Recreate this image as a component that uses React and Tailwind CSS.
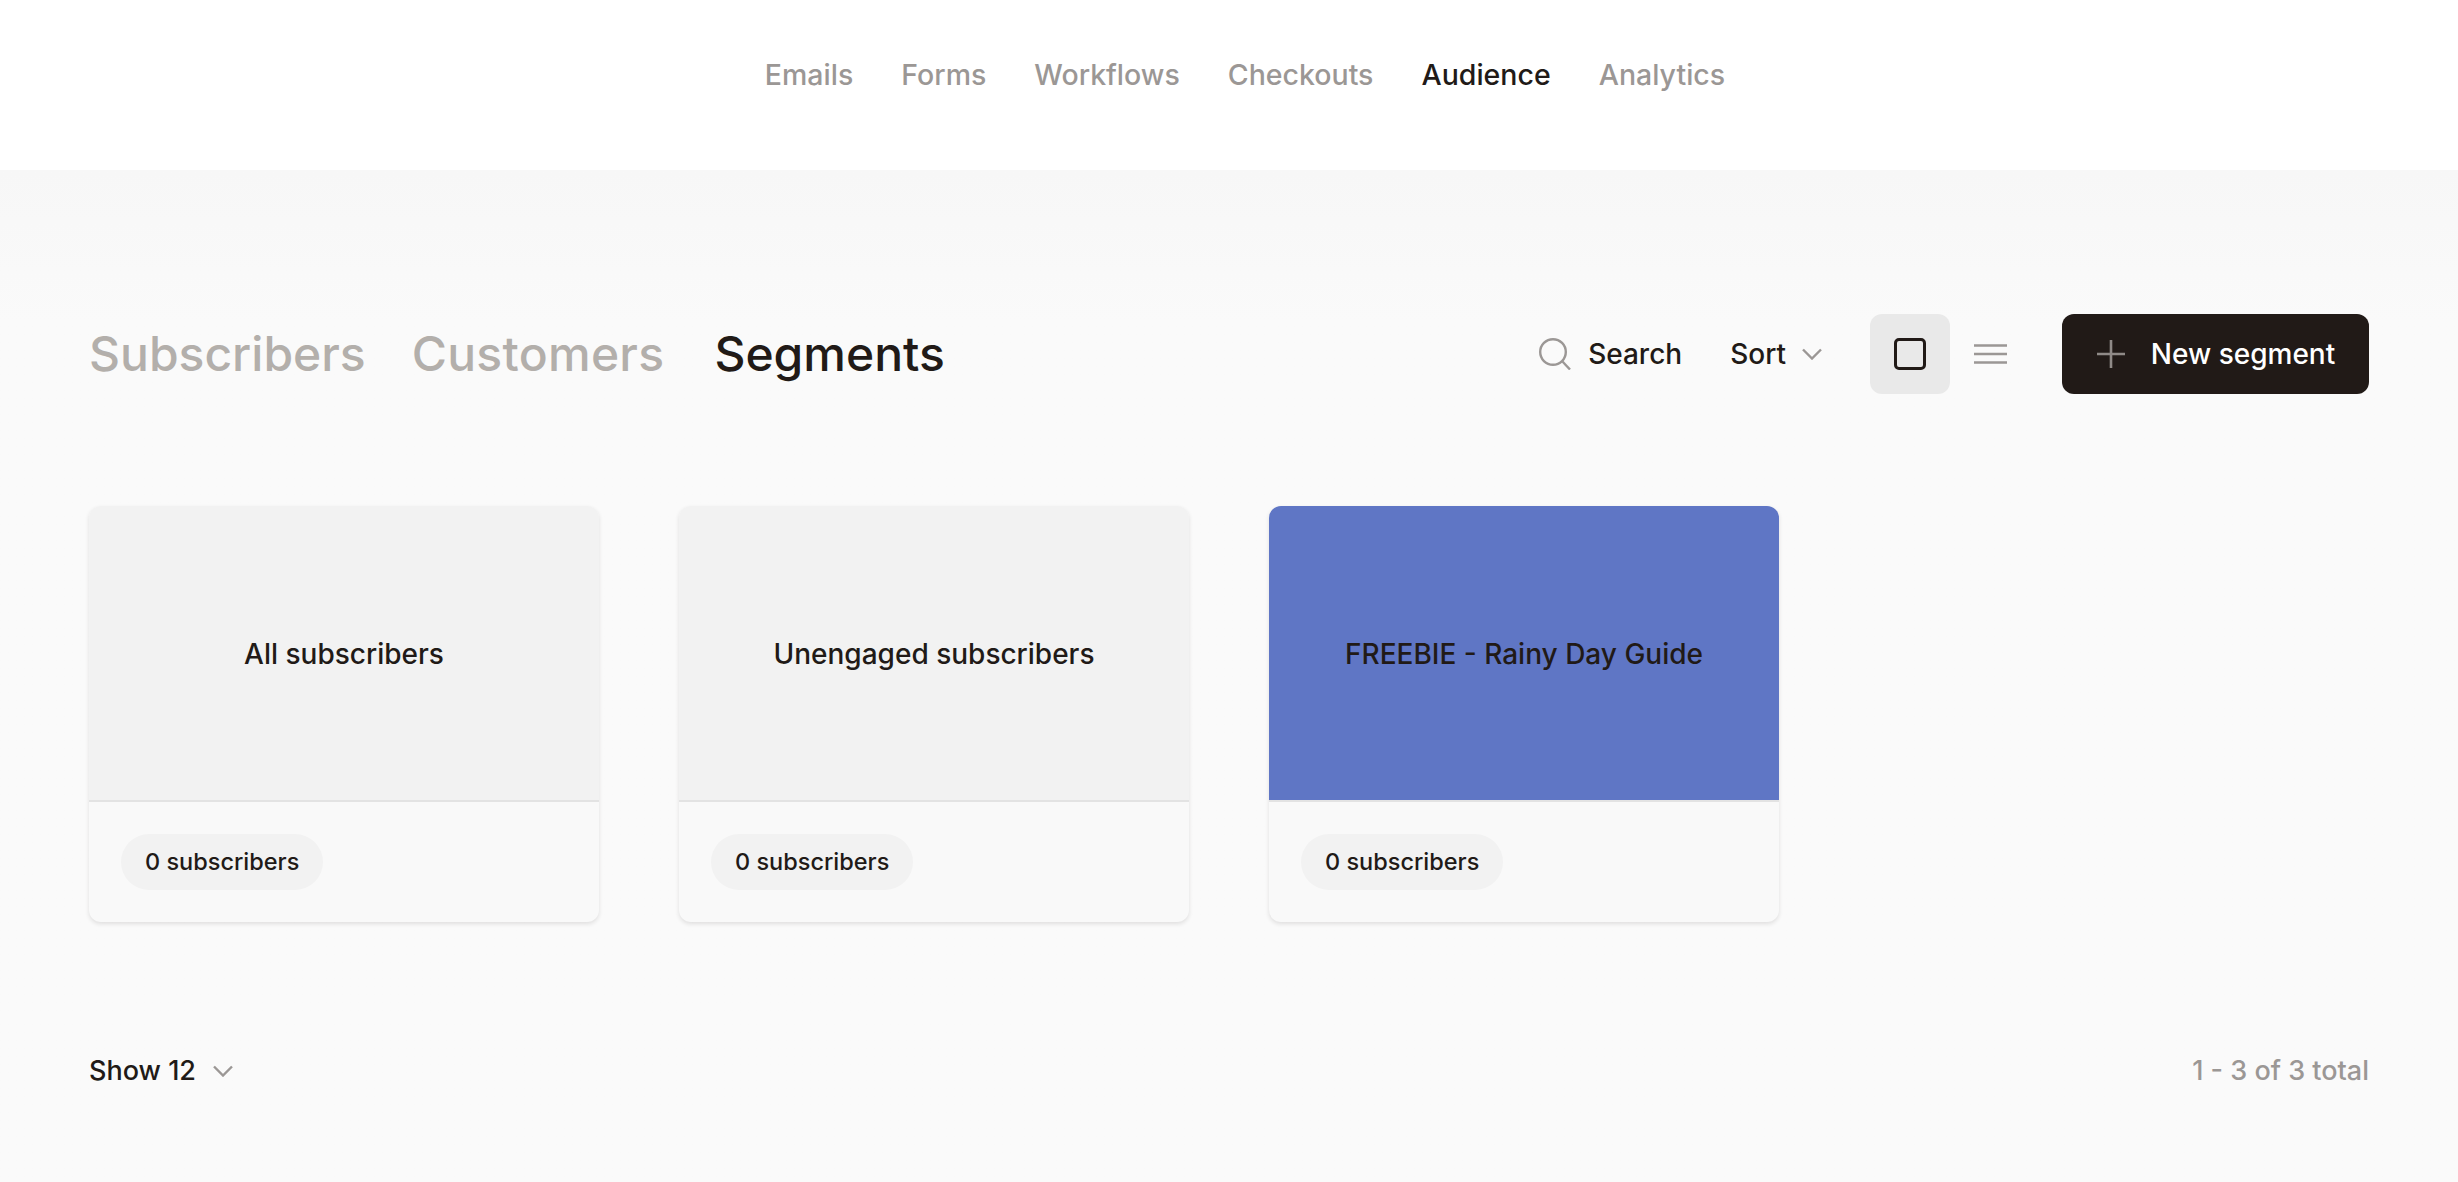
const NAV = ["Emails", "Forms", "Workflows", "Checkouts", "Audience", "Analytics"];

const SEGMENTS = [
  { name: "All subscribers", count: "0 subscribers", head: "bg-[#f2f2f2]" },
  { name: "Unengaged subscribers", count: "0 subscribers", head: "bg-[#f2f2f2]" },
  { name: "FREEBIE - Rainy Day Guide", count: "0 subscribers", head: "bg-[#5f76c5]" },
];

function Chevron({ className }) {
  return (
    <svg viewBox="0 0 20 12" fill="none" className={className}>
      <path d="M1 1.5l9 9 9-9" stroke="#9b9795" strokeWidth="2.4" />
    </svg>
  );
}

function SegmentCard({ segment }) {
  return (
    <div className="h-[416px] flex flex-col rounded-xl bg-[#f9f9f9] overflow-hidden shadow-[0_2px_4px_rgba(33,26,23,0.12)]">
      <div className={`h-[296px] flex items-center justify-center pt-0.5 border-b-2 border-[#e3e3e3] text-[28px] font-medium text-[#211a17] ${segment.head}`}>
        {segment.name}
      </div>
      <div className="flex-1 flex items-center px-8">
        <span className="h-14 px-6 flex items-center rounded-full bg-[#f2f2f2] text-[23.5px] font-medium text-[#211a17]">
          {segment.count}
        </span>
      </div>
    </div>
  );
}

export default function App() {
  return (
    <div className="min-h-screen flex flex-col bg-[#fafafa] font-['Inter',sans-serif] text-[#211a17]">
      <header className="h-[170px] bg-white flex justify-center pt-[55px] pl-8">
        <nav className="flex gap-[48px] h-10 items-center text-[28.5px] font-medium">
          {NAV.map((item) => (
            <a key={item} href="#" className={item === "Audience" ? "text-[#211a17]" : "text-[#9b9795]"}>
              {item}
            </a>
          ))}
        </nav>
      </header>

      <main className="flex-1 px-[89px] pt-[144px] bg-linear-to-b from-[#f7f7f7] to-[#fafafa] to-[15%]">
        <div className="flex items-center justify-between h-20">
          <div className="flex text-[48px] font-medium">
            <span className="text-[#b3afab]">Subscribers</span>
            <span className="ml-[46px] tracking-[0.3px] text-[#b3afab]">Customers</span>
            <span className="ml-[50px]">Segments</span>
          </div>
          <div className="flex items-center text-[28px] font-medium">
            <svg viewBox="0 0 32 32" fill="none" className="w-8 h-8">
              <circle cx="14" cy="14" r="12.8" stroke="#9b9795" strokeWidth="2.4" />
              <path d="M23 23l8 8.5" stroke="#9b9795" strokeWidth="2.4" />
            </svg>
            <span className="ml-[17px]">Search</span>
            <span className="ml-[48px]">Sort</span>
            <Chevron className="ml-4 w-5 h-3" />
            <div className="ml-[48px] w-20 h-20 flex items-center justify-center rounded-xl bg-[#e9e9e9]">
              <div className="w-8 h-8 rounded-[5px] border-[3px] border-[#211a17]" />
            </div>
            <svg viewBox="0 0 33 20" fill="none" className="ml-6 w-[33px] h-5">
              <path d="M0 1.5h33M0 10h33M0 18.5h33" stroke="#9b9795" strokeWidth="2.6" />
            </svg>
            <button className="ml-[55px] h-20 w-[307px] flex items-center justify-center gap-[25px] rounded-xl bg-[#211a17] text-[28px] font-medium text-white">
              <svg viewBox="0 0 30 30" fill="none" className="w-[30px] h-[30px]">
                <path d="M15 1v28M1 15h28" stroke="#8f8a87" strokeWidth="2.6" />
              </svg>
              New segment
            </button>
          </div>
        </div>

        <div className="grid grid-cols-4 gap-[80px] mt-[112px]">
          {SEGMENTS.map((segment) => (
            <SegmentCard key={segment.name} segment={segment} />
          ))}
        </div>

        <div className="flex items-center justify-between mt-[129px] text-[27px] font-medium">
          <div className="flex items-center gap-[17px]">
            <span>Show 12</span>
            <Chevron className="w-5 h-3" />
          </div>
          <span className="text-[#9b9795]">1 - 3 of 3 total</span>
        </div>
      </main>
    </div>
  );
}
